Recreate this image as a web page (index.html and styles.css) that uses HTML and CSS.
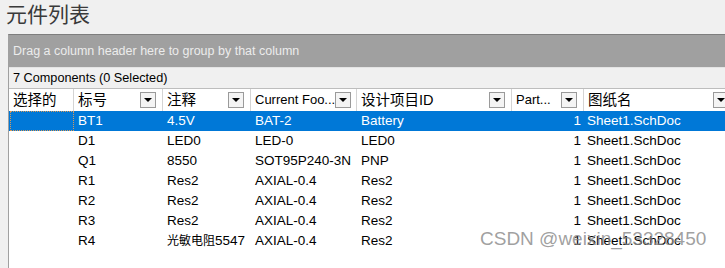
FILE: index.html
```html
<!DOCTYPE html>
<html lang="zh-CN">
<head>
    <meta charset="UTF-8">
    <title>元件列表</title>
    <link rel="stylesheet" href="styles.css">
</head>
<body>
    <h1 class="title">元件列表</h1>

    <div class="panel">
        <div class="group-bar">Drag a column header here to group by that column</div>
        <div class="count-bar">7 Components (0 Selected)</div>

        <div class="grid-row head">
            <div class="cell"><span>选择的</span></div>
            <div class="cell"><span>标号</span><i class="drop"></i></div>
            <div class="cell"><span>注释</span><i class="drop"></i></div>
            <div class="cell"><span class="en">Current Foo...</span><i class="drop"></i></div>
            <div class="cell"><span>设计项目ID</span><i class="drop"></i></div>
            <div class="cell"><span class="en">Part...</span><i class="drop"></i></div>
            <div class="cell"><span>图纸名</span><i class="drop"></i></div>
        </div>

        <div class="grid-row selected">
            <div class="cell focus"></div>
            <div class="cell">BT1</div>
            <div class="cell">4.5V</div>
            <div class="cell">BAT-2</div>
            <div class="cell">Battery</div>
            <div class="cell num">1</div>
            <div class="cell">Sheet1.SchDoc</div>
        </div>
        <div class="grid-row">
            <div class="cell"></div>
            <div class="cell">D1</div>
            <div class="cell">LED0</div>
            <div class="cell">LED-0</div>
            <div class="cell">LED0</div>
            <div class="cell num">1</div>
            <div class="cell">Sheet1.SchDoc</div>
        </div>
        <div class="grid-row">
            <div class="cell"></div>
            <div class="cell">Q1</div>
            <div class="cell">8550</div>
            <div class="cell">SOT95P240-3N</div>
            <div class="cell">PNP</div>
            <div class="cell num">1</div>
            <div class="cell">Sheet1.SchDoc</div>
        </div>
        <div class="grid-row">
            <div class="cell"></div>
            <div class="cell">R1</div>
            <div class="cell">Res2</div>
            <div class="cell">AXIAL-0.4</div>
            <div class="cell">Res2</div>
            <div class="cell num">1</div>
            <div class="cell">Sheet1.SchDoc</div>
        </div>
        <div class="grid-row">
            <div class="cell"></div>
            <div class="cell">R2</div>
            <div class="cell">Res2</div>
            <div class="cell">AXIAL-0.4</div>
            <div class="cell">Res2</div>
            <div class="cell num">1</div>
            <div class="cell">Sheet1.SchDoc</div>
        </div>
        <div class="grid-row">
            <div class="cell"></div>
            <div class="cell">R3</div>
            <div class="cell">Res2</div>
            <div class="cell">AXIAL-0.4</div>
            <div class="cell">Res2</div>
            <div class="cell num">1</div>
            <div class="cell">Sheet1.SchDoc</div>
        </div>
        <div class="grid-row">
            <div class="cell"></div>
            <div class="cell">R4</div>
            <div class="cell"><span class="cjk">光敏电阻</span>5547</div>
            <div class="cell">AXIAL-0.4</div>
            <div class="cell">Res2</div>
            <div class="cell num">1</div>
            <div class="cell">Sheet1.SchDoc</div>
        </div>
    </div>

    <div class="watermark">CSDN @weixin_53328450</div>
</body>
</html>
```

FILE: styles.css
```css
/* 元件列表面板 */
body {
    margin: 0;
    background: #f0f0f0;
    font-family: "Liberation Sans", "Noto Sans CJK SC", sans-serif;
    color: #000;
    overflow: hidden;
    height: 268px;
    position: relative;
}

.title {
    margin: 0;
    height: 34px;
    padding-left: 6px;
    font-size: 21px;
    line-height: 29px;
    font-weight: normal;
    color: #3a3a3a;
}

.panel {
    margin-left: 8px;
    width: 760px;
    height: 240px;
    background: #fff;
    border-left: 1px solid #a0a0a0;
    border-top: 1px solid #7e7e7e;
}

.group-bar {
    height: 32px;
    line-height: 32px;
    padding-left: 4px;
    background: #a0a0a0;
    color: #ececec;
    font-size: 12.5px;
    border-bottom: 1px solid #e4e4e4;
}

.count-bar {
    height: 20px;
    line-height: 20px;
    padding-left: 4px;
    background: #f0f0f0;
    font-size: 12.7px;
    border-bottom: 1px solid #bdbdbd;
}

.grid-row {
    display: grid;
    grid-template-columns: 65px 89px 88px 106px 155px 72px 152px;
    height: 20px;
    line-height: 20px;
    font-size: 13.5px;
}

.cell {
    padding-left: 4px;
    overflow: hidden;
    white-space: nowrap;
}

.cell.num {
    text-align: right;
    padding-right: 3px;
}

.cell.num + .cell {
    padding-left: 3px;
}

.cjk {
    font-size: 12px;
}

/* 表头 */
.head {
    height: 22px;
    line-height: 22px;
    font-size: 14.5px;
}

.head .cell {
    display: flex;
    align-items: center;
    justify-content: space-between;
    padding-right: 6px;
    border-right: 1px solid #d4d4d4;
}

.head .en {
    font-size: 13px;
}

.drop {
    width: 14px;
    height: 14px;
    border: 1px solid #9a9a9a;
    background: #f4f4f4;
    display: flex;
    align-items: center;
    justify-content: center;
    flex-shrink: 0;
}

.drop::before {
    content: "";
    border-left: 4px solid transparent;
    border-right: 4px solid transparent;
    border-top: 4px solid #000;
}

/* 选中行 */
.selected {
    background: #0078d7;
    color: #fff;
}

.focus {
    margin-left: 1px;
    border: 1px dotted #d89a5a;
}

.watermark {
    position: absolute;
    left: 480px;
    top: 228px;
    font-size: 19px;
    color: rgba(135, 135, 135, 0.8);
}
```
